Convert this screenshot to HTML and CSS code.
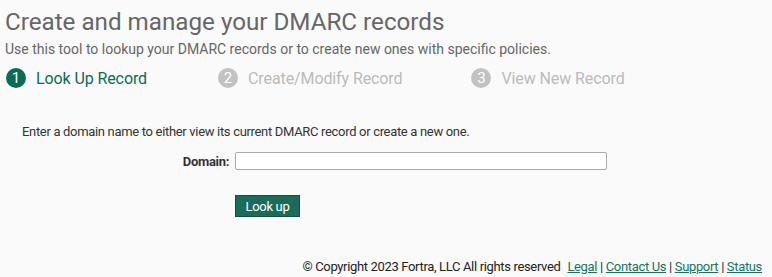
FILE: index.html
```html
<!DOCTYPE html>
<html>
<head>
<meta charset="utf-8">
<link rel="stylesheet" href="styles.css">
</head>
<body>
<div class="page">
  <h1 class="title">Create and manage your DMARC records</h1>
  <p class="subtitle">Use this tool to lookup your DMARC records or to create new ones with specific policies.</p>
  <div class="steps">
    <div class="step active"><span class="num">1</span><span class="label">Look Up Record</span></div>
    <div class="step s2"><span class="num">2</span><span class="label">Create/Modify Record</span></div>
    <div class="step s3"><span class="num">3</span><span class="label">View New Record</span></div>
  </div>
  <div class="content">
    <p class="intro">Enter a domain name to either view its current DMARC record or create a new one.</p>
    <div class="row">
      <label class="lbl" for="domain">Domain:</label>
      <input id="domain" class="field" type="text">
    </div>
    <div class="row btnrow">
      <span class="lbl"></span>
      <button class="btn">Look up</button>
    </div>
  </div>
  <div class="footer">
    <span class="copy">© Copyright 2023 Fortra, LLC All rights reserved</span>
    <a href="#">Legal</a> | <a href="#">Contact Us</a> | <a href="#">Support</a> | <a href="#">Status</a>
  </div>
</div>
</body>
</html>
```
FILE: styles.css
```css
html, body {
  margin: 0;
  padding: 0;
  background: #fafafa;
}
body {
  font-family: Roboto, "Liberation Sans", sans-serif;
  color: #333;
}
.page {
  width: 772px;
  height: 277px;
  overflow: hidden;
  display: flex;
  flex-direction: column;
}
.title {
  margin: 7px 0 0 5px;
  font-size: 24.2px;
  font-weight: 400;
  color: #666;
  line-height: 30px;
}
.subtitle {
  margin: 3px 0 0 5px;
  font-size: 14px;
  color: #666;
  line-height: 18px;
}
.steps {
  display: flex;
  margin: 9px 0 0 6px;
  height: 22px;
  align-items: center;
}
.step {
  display: flex;
  align-items: center;
  color: #bbb;
  font-size: 16px;
  letter-spacing: -0.1px;
}
.step .num {
  width: 20px;
  height: 20px;
  border-radius: 50%;
  background: #c2c2c2;
  color: #fff;
  display: flex;
  align-items: center;
  justify-content: center;
  font-size: 15px;
  margin-right: 10px;
}
.step.active { color: #0b6b55; }
.step.active .num { background: #0b6b55; }
.step.s2 { margin-left: 71px; }
.step.s3 { margin-left: 69px; }
.content {
  margin: 35px 0 0 22px;
}
.intro {
  margin: 0;
  font-size: 13px;
  letter-spacing: -0.32px;
  color: #333;
  line-height: 16px;
}
.row {
  display: flex;
  align-items: center;
  margin-top: 12px;
  height: 18px;
}
.lbl {
  width: 207px;
  text-align: right;
  font-weight: 700;
  font-size: 13px;
  letter-spacing: -0.32px;
  padding-right: 6px;
}
.field {
  width: 372px;
  height: 18px;
  box-sizing: border-box;
  border: 1px solid #aaa;
  border-radius: 2px;
  background: #fff;
  padding: 0;
}
.btnrow {
  margin-top: 25px;
  height: 22px;
}
.btn {
  width: 65px;
  height: 22px;
  background: #1a6b5a;
  color: #fff;
  border: 1px solid #0f4f41;
  font-family: Roboto, "Liberation Sans", sans-serif;
  font-size: 13px;
  letter-spacing: -0.32px;
  padding: 0;
}
.footer {
  margin-top: auto;
  margin-bottom: 2px;
  align-self: flex-end;
  margin-right: 10px;
  font-size: 13px;
  letter-spacing: -0.34px;
  line-height: 16px;
  color: #222;
}
.copy { margin-right: 4px; }
.footer a {
  color: #157560;
  text-decoration: underline;
}
```
